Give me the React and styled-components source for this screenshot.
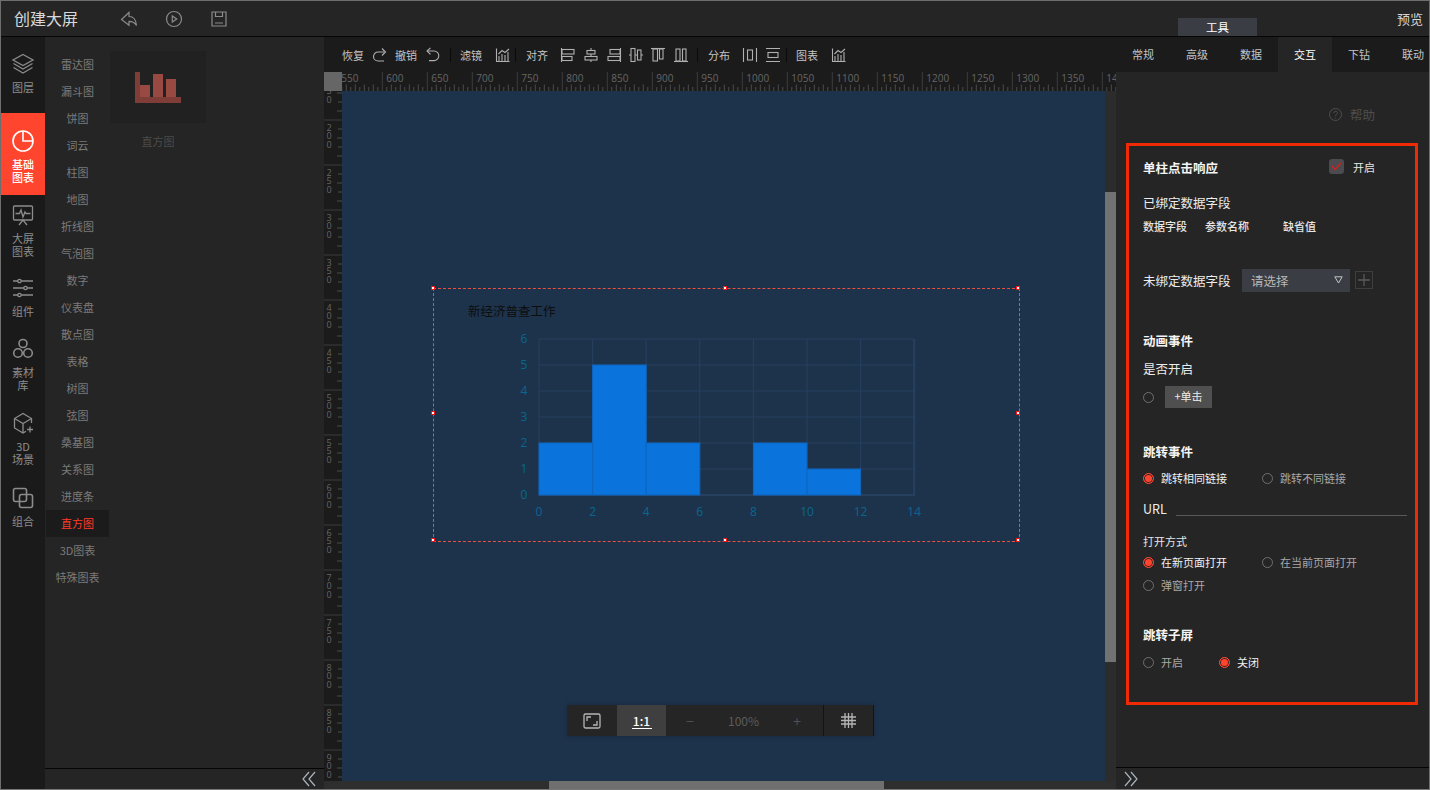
import React from "react";
import styled, { createGlobalStyle } from "styled-components";

const Global = createGlobalStyle`
  html, body { margin: 0; padding: 0; background: #252525; }
  * { box-sizing: border-box; }
  body { font-family: "Noto Sans CJK SC", "Noto Sans", sans-serif; font-size: 11px; }
`;

const Page = styled.div`
  width: 1430px; height: 790px; border: 1px solid #6e6e6e; border-bottom-color: #777;
  background: #252525; display: flex; flex-direction: column; overflow: hidden;
`;
const TopBar = styled.header`
  height: 36px; flex: none; display: flex; align-items: center; position: relative;
  background: #252525; border-bottom: 1px solid #050505; color: #d8d8d8;
`;
const AppTitle = styled.div`
  font-size: 16px; margin-left: 13px; width: 106px; color: #d9d9d9; line-height: 35px;
`;
const TopIcon = styled.svg`
  width: 18px; height: 18px; margin-right: 27px; fill: none; stroke: #8b8b8b; stroke-width: 1.2;
`;
const ToolTag = styled.div`
  position: absolute; left: 1177px; top: 17px; width: 79px; height: 18px; background: #3a3d44;
  color: #fff; font-size: 11.5px; text-align: center; line-height: 19px;
`;
const Preview = styled.div`
  margin-left: auto; margin-right: 6px; font-size: 13px; color: #d5d5d5;
`;
const Main = styled.div`
  flex: 1; display: flex; min-height: 0;
`;

const Rail = styled.nav`
  width: 44px; flex: none; background: #1a1a1a;
`;
const RailItem = styled.div`
  height: ${p => p.$h}px; padding-top: ${p => p.$pt}px; display: flex; flex-direction: column; align-items: center;
  background: ${p => (p.$active ? "#ff452e" : "transparent")};
  color: ${p => (p.$active ? "#fff" : "#8c8c8c")};
`;
const RailIcon = styled.svg`
  width: 24px; height: 24px; flex: none; fill: none; stroke: currentColor; stroke-width: 1.3;
`;
const RailLabel = styled.div`
  margin-top: 4.5px; font-size: 11px; line-height: 13px; width: 24px; text-align: center;
  font-weight: ${p => (p.$active ? 500 : 400)};
`;

const SubPanel = styled.aside`
  width: 279px; flex: none; display: flex; flex-direction: column; background: #252525;
`;
const SubBody = styled.div`
  flex: 1; display: flex; min-height: 0; padding-top: 14px;
`;
const SubList = styled.ul`
  list-style: none; margin: 0; padding: 0 0 0 1px; width: 64px; flex: none;
`;
const SubItem = styled.li`
  width: 63px; height: 27px; line-height: 26px; text-align: center; font-size: 11px;
  color: ${p => (p.$active ? "#ff3b2a" : "#7b7b7b")};
  background: ${p => (p.$active ? "#1b1b1b" : "transparent")};
`;
const ChartCard = styled.div`
  width: 96px; margin-left: 1px;
`;
const CardThumb = styled.div`
  width: 96px; height: 72px; background: #212121; display: flex; align-items: center; justify-content: center;
`;
const CardLabel = styled.div`
  text-align: center; margin-top: 9px; line-height: 18px; color: #4b4b4b; font-size: 11px;
`;
const PanelFoot = styled.div`
  height: ${p => p.$h}px; flex: none; border-top: 1px solid #050505; display: flex; align-items: center;
  justify-content: ${p => (p.$right ? "flex-end" : "flex-start")};
  padding: ${p => (p.$right ? "0 8px 0 0" : "0 0 0 8px")};
`;
const Chevrons = styled.svg`
  width: 14px; height: 16px; fill: none; stroke: #a9b4bd; stroke-width: 1.2;
`;

const Center = styled.main`
  width: 792px; flex: none; display: flex; flex-direction: column; background: #1b1b1b;
`;
const Toolbar = styled.div`
  height: 35px; flex: none; display: flex; align-items: center; padding-left: 18px; background: #1b1b1b;
`;
const ToolText = styled.span`
  font-size: 11px; width: 22px; white-space: nowrap; color: #c4c4c4; margin-left: ${p => p.$ml || 0}px;
`;
const ToolIcon = styled.svg`
  width: 16px; height: 16px; flex: none; fill: none; stroke: #b0b0b0; stroke-width: 1.1;
  margin-left: ${p => p.$ml || 0}px;
`;
const ToolSep = styled.span`
  width: 1px; height: 14px; background: #0a0a0a; flex: none; margin-left: ${p => p.$ml || 0}px;
`;
const RulerRow = styled.div`
  height: 19px; flex: none; display: flex;
`;
const RulerCorner = styled.div`
  width: 18px; height: 19px; background: #666; flex: none;
`;
const RulerSvg = styled.svg`
  display: block; flex: none; background: #1b1b1b;
  text { font-family: "Open Sans", sans-serif; fill: #666; }
`;
const Body = styled.div`
  height: 690px; flex: none; display: flex;
`;
const Canvas = styled.div`
  width: 763px; height: 690px; background: #1d334c; position: relative; flex: none;
`;
const VScroll = styled.div`
  width: 11px; background: #2c2c2c; padding-top: 101px; flex: none;
`;
const VThumb = styled.div`
  height: 470px; background: #727272;
`;
const HScroll = styled.div`
  height: 8px; flex: none; display: flex; background: #2e2e2e; padding-left: 225px;
`;
const HThumb = styled.div`
  width: 335px; background: #6f6f6f;
`;
const Selection = styled.div`
  position: absolute; left: 91px; top: 197px; width: 587px; height: 254px;
  border: 1px dashed #e9503f; padding: 13px 0 0 34px;
`;
const Handle = styled.i`
  position: absolute; width: 2px; height: 2px; background: #fff; outline: 1px solid #f01818;
  left: ${p => p.$x}px; top: ${p => p.$y}px; transform: translate(-50%, -50%);
`;
const ChartTitle = styled.div`
  font-size: 12.5px; line-height: 18px; color: #0d0d0d;
`;
const ChartSvg = styled.svg`
  display: block; margin: 10px 0 0 42px;
  text { font-family: "Open Sans", sans-serif; font-size: 12px; fill: #0a6690; }
`;
const ZoomBar = styled.div`
  position: absolute; left: 225px; top: 614px; height: 31px; display: flex; background: #252525;
  border-right: 1px solid #141414; box-shadow: 0 0 4px rgba(0,0,0,.25);
`;
const ZoomCell = styled.div`
  width: ${p => p.$w}px; display: flex; align-items: center; justify-content: center; color: #fff;
  background: ${p => (p.$active ? "#3f3f3f" : "transparent")};
  border-left: ${p => (p.$divided ? "1px solid #141414" : "none")};
`;
const OneToOne = styled.span`
  font-size: 12px; font-weight: 500; line-height: 15px; border-bottom: 1px solid #fff; padding: 0 1px; width: 20px; text-align: center;
`;
const ZoomCtl = styled.div`
  width: ${p => p.$w}px; display: flex; align-items: center; justify-content: space-between; color: #5c5c5c;
  font-size: 12px; padding: 0 22px 0 20px;
`;
const ZoomSign = styled.span`
  font-size: 15px; font-weight: 300; line-height: 14px;
`;
const CellIcon = styled.svg`
  width: ${p => p.$s}px; height: ${p => p.$s}px; fill: none; stroke: #b5b5b5; stroke-width: 1.3;
`;

const VRulerSvg = styled(RulerSvg)``;

const Right = styled.aside`
  flex: 1; display: flex; flex-direction: column; background: #252525; min-width: 0;
`;
const Tabs = styled.div`
  height: 35px; flex: none; display: flex; background: #1b1b1b;
`;
const Tab = styled.div`
  width: 54px; flex: none; text-align: center; line-height: 35px; font-size: 11px;
  color: ${p => (p.$active ? "#fff" : "#c4c4c4")};
  background: ${p => (p.$active ? "#252525" : "transparent")};
`;
const HelpRow = styled.div`
  height: 71px; flex: none; display: flex; align-items: center; padding: 13px 0 0 213px; color: #4e4e4e; font-size: 12.5px;
`;
const HelpIcon = styled.svg`
  width: 13px; height: 13px; margin-right: 8px; fill: none; stroke: #4e4e4e;
`;
const Annotated = styled.section`
  width: 292px; height: 562px; margin-left: 10px; flex: none; border: 3px solid #f02a05; padding-left: 14px;
  color: #e8e8e8;
`;
const Row = styled.div`
  height: 20px; margin-top: ${p => p.$mt || 0}px; display: flex; align-items: center; white-space: nowrap;
`;
const SpaceRow = styled(Row)`
  justify-content: space-between; padding-right: 40px;
`;
const SectionTitle = styled.div`
  font-size: 12.5px; font-weight: 700; color: #f4f4f4;
`;
const Label = styled.div`
  font-size: 12.5px; color: #ececec; width: ${p => (p.$w ? `${p.$w}px` : "auto")}; flex: none;
`;
const SmallLabel = styled.div`
  font-size: 11px; color: #e6e6e6; font-weight: ${p => (p.$bold ? 500 : 400)};
  width: ${p => (p.$w ? `${p.$w}px` : "auto")}; flex: none;
`;
const CheckGroup = styled.div`
  display: flex; align-items: center; margin-top: -1px;
`;
const CheckBox = styled.div`
  width: 15px; height: 15px; border-radius: 3px; background: #4b4b50; margin-right: 9px;
  display: flex; align-items: center; justify-content: center;
`;
const CheckMark = styled.svg`
  width: 11px; height: 9px; fill: none; stroke: #d8201c; stroke-width: 1.2;
`;
const Select = styled.div`
  width: 108px; height: 23px; background: #3a3d44; display: flex; align-items: center; justify-content: space-between;
  padding: 0 7px 0 9px; color: #b7b7b7; font-size: 12.5px; flex: none;
`;
const Caret = styled.svg`
  width: 9px; height: 8px; fill: none; stroke: #c5c5c5;
`;
const PlusBox = styled.div`
  width: 18px; height: 18px; margin-left: 5px; border: 1px solid #3e3e3e; display: flex; align-items: center; justify-content: center; flex: none;
`;
const PlusIcon = styled.svg`
  width: 12px; height: 12px; stroke: #5a5a5a; stroke-width: 1.3;
`;
const ClickButton = styled.div`
  width: 47px; height: 22px; margin-left: 4px; background: #4f4f4f; color: #ececec; font-size: 11px;
  line-height: 21px; text-align: center;
`;
const Option = styled.div`
  display: flex; align-items: center; width: ${p => p.$w}px; flex: none;
  font-size: 11px; color: ${p => (p.$on ? "#f2f2f2" : "#a8a8a8")};
`;
const RadioDot = styled.span`
  width: 11px; height: 11px; border-radius: 50%; flex: none; margin-right: 7px;
  border: 1px solid ${p => (p.$on ? "#ff4530" : "#707070")};
  background: ${p => (p.$on ? "#ff4530" : "transparent")};
  box-shadow: ${p => (p.$on ? "inset 0 0 0 1px #252525" : "none")};
`;
const UrlLine = styled.div`
  width: 231px; height: 1px; background: #585858; margin: 14px 0 0 9px; flex: none;
`;
const Spacer = styled.div`
  flex: 1;
`;

const menu = ["雷达图","漏斗图","饼图","词云","柱图","地图","折线图","气泡图","数字","仪表盘","散点图","表格","树图","弦图","桑基图","关系图","进度条","直方图","3D图表","特殊图表"];

const railIcons = {
  layers: <><path d="M12 2.500 22 8l-10 5.500L2 8z"/><path d="M2.500 11.500 12 17l9.500-5.500"/><path d="M2.500 15.500 12 21l9.500-5.500"/></>,
  pie: <><circle cx="12" cy="12" r="10" strokeWidth="1.6"/><path d="M12 2v10h10" strokeWidth="1.6"/></>,
  screen: <><rect x="2.500" y="3" width="19" height="14" rx="1"/><path d="M4.500 10.500h4l1.500-3.500 2 7 2-5 1 1.500h4.500"/><path d="m8 22 4-5 4 5"/></>,
  sliders: <><path d="M2 5h5M10 5h12M2 12h11M16 12h6M2 19h5M10 19h12"/><circle cx="8.500" cy="5" r="1.700"/><circle cx="14.500" cy="12" r="1.700"/><circle cx="8.500" cy="19" r="1.700"/></>,
  hex: <><circle cx="12" cy="6.500" r="4" strokeWidth="1.6"/><circle cx="7" cy="16" r="4.300" strokeWidth="1.6"/><circle cx="17" cy="16" r="4.300" strokeWidth="1.6"/></>,
  cube: <><path d="M20.500 12V7.500L12 2.500 3.500 7.500v9.500l8.500 5 3-1.700"/><path d="M3.500 7.500 12 12.500l8.500-5M12 12.500V22"/><path d="M19 15.500v6M16 18.500h6"/></>,
  merge: <><rect x="2.500" y="2.500" width="13" height="13" rx="2" strokeWidth="1.6"/><rect x="8.500" y="8.500" width="13" height="13" rx="2" strokeWidth="1.6"/></>,
};

const chartGlyph = <><path d="M1.500 1.500v13h13"/><path d="M4 14V9M7 14V7M10 14V8M13 14V5"/><path d="M3.500 7 7 3.500l3 2L14 2"/></>;
const toolGlyphs = {
  redo: <><path d="M12 5H6a4.500 4.500 0 0 0 0 9h6"/><path d="m10 1.500 3.500 3.500L10 8.500"/></>,
  undo: <><path d="M4 4h6a4.800 4.800 0 0 1 0 9.600H5"/><path d="M6.500.8 3 4l3.500 3.400"/></>,
  chart: chartGlyph,
  aL: <><path d="M1.500 1v14"/><rect x="2" y="2.500" width="12" height="4.500"/><rect x="2" y="9.500" width="10" height="4"/></>,
  aC: <><path d="M8 1v2.500M8 7v2.500M8 13v2"/><rect x="4" y="3.500" width="8" height="3.500"/><rect x="2" y="9.500" width="12" height="3.500"/></>,
  aR: <><path d="M14.500 1v14"/><rect x="4" y="2.500" width="10" height="4.500"/><rect x="2" y="9.500" width="12" height="4"/></>,
  aM: <><path d="M1 8h2M7 8h2M13 8h2"/><rect x="3" y="1.500" width="4" height="13"/><rect x="9.500" y="3" width="3.500" height="10"/></>,
  aT: <><path d="M1 1.500h14"/><rect x="3" y="2" width="4.500" height="12"/><rect x="9.500" y="2" width="3.500" height="10"/></>,
  aB: <><path d="M1 14.500h14"/><rect x="3" y="2" width="4" height="12"/><rect x="9.500" y="2" width="3.500" height="12"/></>,
  dH: <><path d="M1.500 1v14M14.500 1v14"/><rect x="5.500" y="3" width="5" height="10"/></>,
  dV: <><path d="M1 1.500h14M1 14.500h14"/><rect x="3" y="5.500" width="10" height="5"/></>,
};

function Hruler() {
  const els = [];
  for (let k = 0; k <= 17; k++) {
    const x = -4.7 + 45 * k;
    els.push(<path key={`m${k}`} d={`M${x} 0V19`} stroke="#3d3d3d" />);
    els.push(<text key={`t${k}`} x={x + 4} y={9.5} fontSize="10">{550 + k * 50}</text>);
    for (let i = 1; i < 10; i++) {
      const tx = x + 4.5 * i;
      els.push(<path key={`s${k}-${i}`} d={`M${tx} ${i % 2 ? 15 : 12.5}V19`} stroke="#4c4c4c" />);
    }
  }
  return <RulerSvg width="774" height="19">{els}</RulerSvg>;
}

function Vruler() {
  const els = [];
  for (let k = 0; k <= 16; k++) {
    const y = -16 + 45 * k;
    els.push(<path key={`m${k}`} d={`M0 ${y}H18`} stroke="#3d3d3d" />);
    els.push(
      <text key={`t${k}`} x={5} y={y + 1.7} textAnchor="middle" fontSize="9">
        {String(150 + k * 50).split("").map((d, i) => <tspan key={i} x={5} dy={8.8}>{d}</tspan>)}
      </text>
    );
    for (let i = 1; i < 5; i++) {
      els.push(<path key={`s${k}-${i}`} d={`M${i % 2 ? 14 : 13} ${y + 9 * i}H18`} stroke="#4c4c4c" />);
    }
  }
  return <VRulerSvg width="18" height="690">{els}</VRulerSvg>;
}

function Chart() {
  const X = v => 539 + v * 26.8;
  const Y = v => 495 - v * 26;
  const bars = [[0, 2], [2, 5], [4, 2], [8, 2], [10, 1]];
  const xs = [0, 2, 4, 6, 8, 10, 12, 14];
  const ys = [0, 1, 2, 3, 4, 5, 6];
  return (
    <ChartSvg width="420" height="190" viewBox="510 330 420 190">
      {ys.map(v => <path key={v} d={`M539 ${Y(v)}H914`} stroke="#27405f" strokeWidth={v === 0 ? 2 : 1} />)}
      {xs.map(v => <path key={v} d={`M${X(v)} 339V496`} stroke="#27405f" strokeWidth={v === 14 ? 2 : 1} />)}
      {bars.map(([x, v]) => (
        <rect key={x} x={X(x)} y={Y(v)} width={53.6} height={v * 26} fill="#0a73dc" stroke="#0e66c0" />
      ))}
      {ys.map(v => <text key={v} x="524" y={Y(v) + 4} textAnchor="middle">{v}</text>)}
      {xs.map(v => <text key={v} x={X(v)} y="516" textAnchor="middle">{v}</text>)}
    </ChartSvg>
  );
}

const handles = [[-1,-1],[291,-1],[584,-1],[-1,124],[584,124],[-1,251],[291,251],[584,251]];

const T = ({ g, ml }) => <ToolIcon $ml={ml} viewBox="0 0 16 16">{toolGlyphs[g]}</ToolIcon>;
const Radio = ({ on, w, children }) => <Option $on={on} $w={w}><RadioDot $on={on} />{children}</Option>;

const rail = [
  { k: "layers", h: 76, pt: 15, t: "图层" },
  { k: "pie", h: 82, pt: 16, t: "基础图表", active: true },
  { k: "screen", h: 77, pt: 8, t: "大屏图表" },
  { k: "sliders", h: 61, pt: 4, t: "组件" },
  { k: "hex", h: 74, pt: 4, t: "素材库" },
  { k: "cube", h: 75, pt: 4, t: "3D场景" },
  { k: "merge", h: 60, pt: 4, t: "组合" },
];

export default function App() {
  return (
    <Page>
      <Global />
      <TopBar>
        <AppTitle>创建大屏</AppTitle>
        <TopIcon viewBox="0 0 18 18"><path d="M1.500 9.500 9 2.500v4c4 0 7 3 7.500 9-1.500-3-4-4.200-7.500-4.200v4z"/></TopIcon>
        <TopIcon viewBox="0 0 18 18"><circle cx="9" cy="9" r="7.500"/><path d="M7.300 6v6l4.400-3z"/></TopIcon>
        <TopIcon viewBox="0 0 18 18"><path d="M2 2h14v14H2z"/><path d="M5.500 2v4.500h7V2M5 13h8"/></TopIcon>
        <ToolTag>工具</ToolTag>
        <Preview>预览</Preview>
      </TopBar>
      <Main>
        <Rail>
          {rail.map(r => (
            <RailItem key={r.k} $h={r.h} $pt={r.pt} $active={r.active}>
              <RailIcon viewBox="0 0 24 24">{railIcons[r.k]}</RailIcon>
              <RailLabel $active={r.active}>{r.t}</RailLabel>
            </RailItem>
          ))}
        </Rail>
        <SubPanel>
          <SubBody>
            <SubList>
              {menu.map(m => <SubItem key={m} $active={m === "直方图"}>{m}</SubItem>)}
            </SubList>
            <ChartCard>
              <CardThumb>
                <svg width="46" height="31" viewBox="0 0 46 31">
                  <path d="M0 0h5v25h41v6H0z" fill="#7e3d37" />
                  <path d="M5 13h10v12H5zM18 2h10v23H18zM31 7h10v18H31z" fill="#984a42" />
                </svg>
              </CardThumb>
              <CardLabel>直方图</CardLabel>
            </ChartCard>
          </SubBody>
          <PanelFoot $h={21} $right>
            <Chevrons viewBox="0 0 14 16"><path d="M7 1 1 8l6 7M13 1 7 8l6 7"/></Chevrons>
          </PanelFoot>
        </SubPanel>
        <Center>
          <Toolbar>
            <ToolText>恢复</ToolText>
            <T g="redo" ml={8} />
            <ToolText $ml={7}>撤销</ToolText>
            <T g="undo" ml={7} />
            <ToolSep $ml={10} />
            <ToolText $ml={9}>滤镜</ToolText>
            <T g="chart" ml={13} />
            <ToolSep $ml={4} />
            <ToolText $ml={10}>对齐</ToolText>
            <T g="aL" ml={12} />
            <T g="aC" ml={7} />
            <T g="aR" ml={7} />
            <T g="aM" ml={6} />
            <T g="aT" ml={6} />
            <T g="aB" ml={7} />
            <ToolSep $ml={8} />
            <ToolText $ml={10}>分布</ToolText>
            <T g="dH" ml={12} />
            <T g="dV" ml={7} />
            <ToolSep $ml={5} />
            <ToolText $ml={9}>图表</ToolText>
            <T g="chart" ml={13} />
          </Toolbar>
          <RulerRow>
            <RulerCorner />
            <Hruler />
          </RulerRow>
          <Body>
            <Vruler />
            <Canvas>
              <Selection>
                <ChartTitle>新经济普查工作</ChartTitle>
                <Chart />
                {handles.map(([x, y]) => <Handle key={`${x}-${y}`} $x={x} $y={y} />)}
              </Selection>
              <ZoomBar>
                <ZoomCell $w={50}>
                  <CellIcon $s={18} viewBox="0 0 18 18"><rect x="1" y="2" width="16" height="14" rx="1.500"/><path d="M4 9V5h4M14 9v4h-4"/></CellIcon>
                </ZoomCell>
                <ZoomCell $w={49} $active><OneToOne>1:1</OneToOne></ZoomCell>
                <ZoomCtl $w={157}>
                  <ZoomSign>−</ZoomSign>
                  <span>100%</span>
                  <ZoomSign>+</ZoomSign>
                </ZoomCtl>
                <ZoomCell $w={50} $divided>
                  <CellIcon $s={15} viewBox="0 0 15 15"><path d="M4 0v15M7.500 0v15M11 0v15M0 4h15M0 7.500h15M0 11h15"/></CellIcon>
                </ZoomCell>
              </ZoomBar>
            </Canvas>
            <VScroll><VThumb /></VScroll>
          </Body>
          <HScroll><HThumb /></HScroll>
        </Center>
        <Right>
          <Tabs>
            <Tab>常规</Tab>
            <Tab>高级</Tab>
            <Tab>数据</Tab>
            <Tab $active>交互</Tab>
            <Tab>下钻</Tab>
            <Tab>联动</Tab>
          </Tabs>
          <HelpRow>
            <HelpIcon viewBox="0 0 13 13"><circle cx="6.500" cy="6.500" r="6"/><path d="M4.800 5a1.800 1.800 0 1 1 2.700 1.500c-.7.400-1 .8-1 1.500M6.500 9.500v1"/></HelpIcon>
            帮助
          </HelpRow>
          <Annotated>
            <SpaceRow $mt={11}>
              <SectionTitle>单柱点击响应</SectionTitle>
              <CheckGroup>
                <CheckBox><CheckMark viewBox="0 0 11 9"><path d="m1 4 3 3.500L10 1"/></CheckMark></CheckBox>
                <SmallLabel>开启</SmallLabel>
              </CheckGroup>
            </SpaceRow>
            <Row $mt={15}><Label>已绑定数据字段</Label></Row>
            <Row $mt={4}>
              <SmallLabel $bold $w={62}>数据字段</SmallLabel>
              <SmallLabel $bold $w={78}>参数名称</SmallLabel>
              <SmallLabel $bold>缺省值</SmallLabel>
            </Row>
            <Row $mt={34}>
              <Label $w={99}>未绑定数据字段</Label>
              <Select>请选择<Caret viewBox="0 0 9 8"><path d="M.8.800h7.400L4.500 7z"/></Caret></Select>
              <PlusBox><PlusIcon viewBox="0 0 12 12"><path d="M6 0v12M0 6h12"/></PlusIcon></PlusBox>
            </Row>
            <Row $mt={40}><SectionTitle>动画事件</SectionTitle></Row>
            <Row $mt={8}><Label>是否开启</Label></Row>
            <Row $mt={9}>
              <RadioDot />
              <ClickButton>+单击</ClickButton>
            </Row>
            <Row $mt={34}><SectionTitle>跳转事件</SectionTitle></Row>
            <Row $mt={7}>
              <Radio on w={119}>跳转相同链接</Radio>
              <Radio w={150}>跳转不同链接</Radio>
            </Row>
            <Row $mt={10}><Label $w={24}>URL</Label><UrlLine /></Row>
            <Row $mt={13}><SmallLabel>打开方式</SmallLabel></Row>
            <Row $mt={1}>
              <Radio on w={119}>在新页面打开</Radio>
              <Radio w={150}>在当前页面打开</Radio>
            </Row>
            <Row $mt={3}><Radio w={119}>弹窗打开</Radio></Row>
            <Row $mt={29}><SectionTitle>跳转子屏</SectionTitle></Row>
            <Row $mt={8}>
              <Radio w={76}>开启</Radio>
              <Radio on w={76}>关闭</Radio>
            </Row>
          </Annotated>
          <Spacer />
          <PanelFoot $h={22}>
            <Chevrons viewBox="0 0 14 16"><path d="M1 1l6 7-6 7M7 1l6 7-6 7"/></Chevrons>
          </PanelFoot>
        </Right>
      </Main>
    </Page>
  );
}
